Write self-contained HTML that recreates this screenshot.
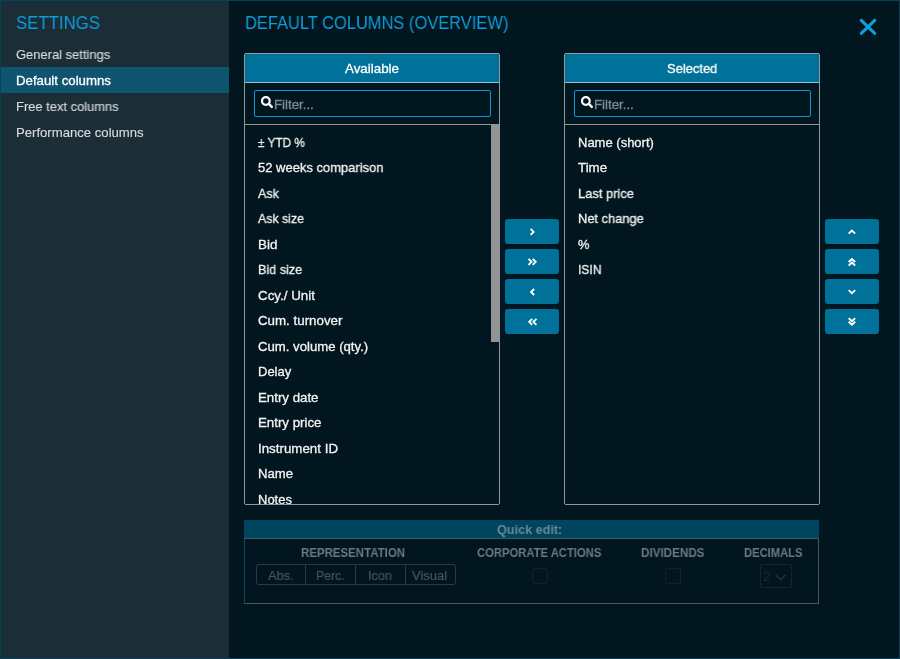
<!DOCTYPE html>
<html lang="en">
<head>
<meta charset="utf-8">
<title>Settings</title>
<style>
*{box-sizing:border-box;margin:0;padding:0}
html,body{width:900px;height:659px;overflow:hidden;background:#01161f}
body{font-family:"Liberation Sans",sans-serif;font-size:13px;color:#f2f2f2;position:relative}
.t{position:absolute;display:block;white-space:nowrap;line-height:20px;height:20px;transform-origin:0 50%;will-change:transform}
#frame{position:absolute;left:0;top:0;width:900px;height:659px;border:1px solid #0a3f58;pointer-events:none;z-index:10}
#side{position:absolute;left:0;top:0;width:229px;height:659px;background:#1b2e37}
.mi{position:absolute;left:0;width:229px;height:26px}
.mi.sel{background:#0f5570}
.panel{position:absolute;top:53px;width:256px;height:452px;border:1px solid rgba(255,255,255,.56);border-radius:2px;overflow:hidden}
.hd{position:absolute;left:0;top:0;width:254px;height:29px;background:#007199;border-bottom:1px solid rgba(255,255,255,.56)}
.sb{position:absolute;left:9px;top:36px;width:237px;height:27px;border:1px solid #0a98d4;border-radius:2px}
.dv{position:absolute;left:0;top:70px;width:254px;height:1px;background:rgba(255,255,255,.56)}
.scr{position:absolute;left:246px;top:71px;width:8px;height:217px;background:#939393}
.btn{position:absolute;width:54px;height:25px;background:#007199;border-radius:3px}
.btn svg{position:absolute;left:0;top:0}
svg{display:block;overflow:visible}
#qe{position:absolute;left:244px;top:520px;width:575px;height:84px;border:1px solid #46575f;border-top:none;border-left-color:#044a66}
#qeh{position:absolute;left:244px;top:520px;width:575px;height:19px;background:#00455f;border-bottom:1px solid #44565f}
.grp{position:absolute;left:256px;top:564px;width:200px;height:21px;border:1px solid #293b44;border-radius:3px}
.grp i{position:absolute;top:0;width:1px;height:19px;background:#293b44}
.cb{position:absolute;top:568px;width:16px;height:16px;border:1px solid #10232c;border-radius:2px}
.sel2{position:absolute;left:760px;top:564px;width:32px;height:24px;border:1px solid #13262f;border-radius:2px}
</style>
</head>
<body>
<div id="side">
<div class="mi sel" style="top:67px"></div>
</div>
<span class="t" style="left:15.80px;top:12.69px;font-size:18.5px;color:#0c9eda;transform:scaleX(0.9070);">SETTINGS</span>
<span class="t" style="left:15.70px;top:44.70px;font-size:13px;color:#d9dddf;transform:scaleX(0.9945);-webkit-text-stroke:0.12px #d9dddf;">General settings</span>
<span class="t" style="left:15.90px;top:70.70px;font-size:13px;color:#ffffff;transform:scaleX(1.0188);-webkit-text-stroke:0.3px #ffffff;">Default columns</span>
<span class="t" style="left:16.10px;top:96.70px;font-size:13px;color:#d9dddf;transform:scaleX(0.9935);-webkit-text-stroke:0.12px #d9dddf;">Free text columns</span>
<span class="t" style="left:16.10px;top:122.70px;font-size:13px;color:#d9dddf;transform:scaleX(1.0095);-webkit-text-stroke:0.12px #d9dddf;">Performance columns</span>
<span class="t" style="left:245.00px;top:12.69px;font-size:18.5px;color:#0c9eda;transform:scaleX(0.8895);">DEFAULT COLUMNS (OVERVIEW)</span>
<svg style="position:absolute;left:856px;top:15px" width="24" height="24" viewBox="856 15 24 24"><path d="M861.3 20.3 L874.7 33.4 M874.7 20.3 L861.3 33.4" stroke="#0c9fd9" stroke-width="3.1" stroke-linecap="round" fill="none"/></svg>
<div class="panel" style="left:244px"><div class="hd"></div><div class="sb"></div><div class="dv"></div><div class="scr"></div></div>
<div class="panel" style="left:564px"><div class="hd"></div><div class="sb"></div><div class="dv"></div></div>
<span class="t" style="left:344.90px;top:58.50px;font-size:13px;color:#ffffff;transform:scaleX(1.0286);-webkit-text-stroke:0.3px #ffffff;">Available</span>
<span class="t" style="left:666.60px;top:58.50px;font-size:13px;color:#ffffff;transform:scaleX(0.9936);-webkit-text-stroke:0.3px #ffffff;">Selected</span>
<svg style="position:absolute;left:260px;top:94px" width="16" height="16" viewBox="0 0 16 16"><circle cx="5.85" cy="7" r="3.85" stroke="#fff" stroke-width="2.2" fill="none"/><path d="M8.8 9.9 L11.8 12.9" stroke="#fff" stroke-width="2.4" stroke-linecap="round"/></svg>
<svg style="position:absolute;left:580px;top:94px" width="16" height="16" viewBox="0 0 16 16"><circle cx="5.85" cy="7" r="3.85" stroke="#fff" stroke-width="2.2" fill="none"/><path d="M8.8 9.9 L11.8 12.9" stroke="#fff" stroke-width="2.4" stroke-linecap="round"/></svg>
<span class="t" style="left:273.80px;top:94.50px;font-size:13px;color:#828c91;transform:scaleX(1.0205);-webkit-text-stroke:0.3px #828c91;">Filter...</span>
<span class="t" style="left:593.80px;top:94.50px;font-size:13px;color:#828c91;transform:scaleX(1.0205);-webkit-text-stroke:0.3px #828c91;">Filter...</span>
<span class="t" style="left:257.90px;top:132.50px;font-size:13px;color:#f4f4f4;transform:scaleX(0.9085);-webkit-text-stroke:0.3px #f4f4f4;">± YTD %</span>
<span class="t" style="left:257.90px;top:157.50px;font-size:13px;color:#f4f4f4;transform:scaleX(0.9980);-webkit-text-stroke:0.3px #f4f4f4;">52 weeks comparison</span>
<span class="t" style="left:257.90px;top:183.50px;font-size:13px;color:#f4f4f4;transform:scaleX(0.9609);-webkit-text-stroke:0.3px #f4f4f4;">Ask</span>
<span class="t" style="left:257.90px;top:208.50px;font-size:13px;color:#f4f4f4;transform:scaleX(0.9488);-webkit-text-stroke:0.3px #f4f4f4;">Ask size</span>
<span class="t" style="left:257.90px;top:234.50px;font-size:13px;color:#f4f4f4;transform:scaleX(1.0347);-webkit-text-stroke:0.3px #f4f4f4;">Bid</span>
<span class="t" style="left:257.90px;top:259.50px;font-size:13px;color:#f4f4f4;transform:scaleX(0.9714);-webkit-text-stroke:0.3px #f4f4f4;">Bid size</span>
<span class="t" style="left:257.90px;top:285.50px;font-size:13px;color:#f4f4f4;transform:scaleX(1.0275);-webkit-text-stroke:0.3px #f4f4f4;">Ccy./ Unit</span>
<span class="t" style="left:257.90px;top:310.50px;font-size:13px;color:#f4f4f4;transform:scaleX(1.0246);-webkit-text-stroke:0.3px #f4f4f4;">Cum. turnover</span>
<span class="t" style="left:257.90px;top:336.50px;font-size:13px;color:#f4f4f4;transform:scaleX(1.0122);-webkit-text-stroke:0.3px #f4f4f4;">Cum. volume (qty.)</span>
<span class="t" style="left:257.90px;top:361.50px;font-size:13px;color:#f4f4f4;transform:scaleX(0.9925);-webkit-text-stroke:0.3px #f4f4f4;">Delay</span>
<span class="t" style="left:257.90px;top:387.50px;font-size:13px;color:#f4f4f4;transform:scaleX(1.0211);-webkit-text-stroke:0.3px #f4f4f4;">Entry date</span>
<span class="t" style="left:257.90px;top:412.50px;font-size:13px;color:#f4f4f4;transform:scaleX(1.0221);-webkit-text-stroke:0.3px #f4f4f4;">Entry price</span>
<span class="t" style="left:257.90px;top:438.50px;font-size:13px;color:#f4f4f4;transform:scaleX(1.0256);-webkit-text-stroke:0.3px #f4f4f4;">Instrument ID</span>
<span class="t" style="left:257.90px;top:463.50px;font-size:13px;color:#f4f4f4;transform:scaleX(1.0108);-webkit-text-stroke:0.3px #f4f4f4;">Name</span>
<div style="position:absolute;left:245px;top:480px;width:254px;height:24px;overflow:hidden"><span class="t" style="left:12.90px;top:9.50px;font-size:13px;color:#f4f4f4;transform:scaleX(0.9971);-webkit-text-stroke:0.3px #f4f4f4;">Notes</span>
</div>
<span class="t" style="left:578.00px;top:132.50px;font-size:13px;color:#f4f4f4;transform:scaleX(1.0003);-webkit-text-stroke:0.3px #f4f4f4;">Name (short)</span>
<span class="t" style="left:578.00px;top:157.50px;font-size:13px;color:#f4f4f4;transform:scaleX(1.0256);-webkit-text-stroke:0.3px #f4f4f4;">Time</span>
<span class="t" style="left:578.00px;top:183.50px;font-size:13px;color:#f4f4f4;transform:scaleX(0.9898);-webkit-text-stroke:0.3px #f4f4f4;">Last price</span>
<span class="t" style="left:578.00px;top:208.50px;font-size:13px;color:#f4f4f4;transform:scaleX(0.9895);-webkit-text-stroke:0.3px #f4f4f4;">Net change</span>
<span class="t" style="left:578.00px;top:234.50px;font-size:13px;color:#f4f4f4;transform:scaleX(0.9826);-webkit-text-stroke:0.3px #f4f4f4;">%</span>
<span class="t" style="left:578.00px;top:259.50px;font-size:13px;color:#f4f4f4;transform:scaleX(0.9267);-webkit-text-stroke:0.3px #f4f4f4;">ISIN</span>
<div class="btn" style="left:505px;top:219px"><svg width="54" height="25" viewBox="0 0 54 25"><path d="M25.60 9.90 L28.60 12.90 L25.60 15.90" stroke="#fff" stroke-width="1.9" fill="none" stroke-linejoin="miter" stroke-linecap="butt"/></svg></div>
<div class="btn" style="left:505px;top:249px"><svg width="54" height="25" viewBox="0 0 54 25"><path d="M23.50 9.80 L26.50 12.80 L23.50 15.80" stroke="#fff" stroke-width="1.9" fill="none" stroke-linejoin="miter" stroke-linecap="butt"/><path d="M27.70 9.80 L30.70 12.80 L27.70 15.80" stroke="#fff" stroke-width="1.9" fill="none" stroke-linejoin="miter" stroke-linecap="butt"/></svg></div>
<div class="btn" style="left:505px;top:279px"><svg width="54" height="25" viewBox="0 0 54 25"><path d="M29.10 10.00 L26.10 13.00 L29.10 16.00" stroke="#fff" stroke-width="1.9" fill="none" stroke-linejoin="miter" stroke-linecap="butt"/></svg></div>
<div class="btn" style="left:505px;top:309px"><svg width="54" height="25" viewBox="0 0 54 25"><path d="M27.20 9.80 L24.20 12.80 L27.20 15.80" stroke="#fff" stroke-width="1.9" fill="none" stroke-linejoin="miter" stroke-linecap="butt"/><path d="M31.40 9.80 L28.40 12.80 L31.40 15.80" stroke="#fff" stroke-width="1.9" fill="none" stroke-linejoin="miter" stroke-linecap="butt"/></svg></div>
<div class="btn" style="left:825px;top:219px"><svg width="54" height="25" viewBox="0 0 54 25"><path d="M23.65 14.60 L26.90 11.60 L30.15 14.60" stroke="#fff" stroke-width="1.9" fill="none" stroke-linejoin="miter" stroke-linecap="butt"/></svg></div>
<div class="btn" style="left:825px;top:249px"><svg width="54" height="25" viewBox="0 0 54 25"><path d="M23.65 12.95 L26.90 9.95 L30.15 12.95" stroke="#fff" stroke-width="1.9" fill="none" stroke-linejoin="miter" stroke-linecap="butt"/><path d="M23.65 16.45 L26.90 13.45 L30.15 16.45" stroke="#fff" stroke-width="1.9" fill="none" stroke-linejoin="miter" stroke-linecap="butt"/></svg></div>
<div class="btn" style="left:825px;top:279px"><svg width="54" height="25" viewBox="0 0 54 25"><path d="M23.65 11.17 L26.90 14.17 L30.15 11.17" stroke="#fff" stroke-width="1.9" fill="none" stroke-linejoin="miter" stroke-linecap="butt"/></svg></div>
<div class="btn" style="left:825px;top:309px"><svg width="54" height="25" viewBox="0 0 54 25"><path d="M23.65 9.30 L26.90 12.30 L30.15 9.30" stroke="#fff" stroke-width="1.9" fill="none" stroke-linejoin="miter" stroke-linecap="butt"/><path d="M23.65 12.80 L26.90 15.80 L30.15 12.80" stroke="#fff" stroke-width="1.9" fill="none" stroke-linejoin="miter" stroke-linecap="butt"/></svg></div>
<div id="qe"></div><div id="qeh"></div>
<span class="t" style="left:497.30px;top:520.00px;font-size:13px;color:#6a8794;transform:scaleX(0.9713);font-weight:bold;">Quick edit:</span>
<span class="t" style="left:301.40px;top:542.84px;font-size:12px;color:#6b7a82;transform:scaleX(0.9552);font-weight:bold;">REPRESENTATION</span>
<span class="t" style="left:476.90px;top:542.84px;font-size:12px;color:#6b7a82;transform:scaleX(0.9365);font-weight:bold;">CORPORATE ACTIONS</span>
<span class="t" style="left:641.00px;top:542.84px;font-size:12px;color:#6b7a82;transform:scaleX(0.9713);font-weight:bold;">DIVIDENDS</span>
<span class="t" style="left:743.90px;top:542.84px;font-size:12px;color:#6b7a82;transform:scaleX(0.9325);font-weight:bold;">DECIMALS</span>
<div class="grp"><i style="left:48px"></i><i style="left:98px"></i><i style="left:148px"></i></div>
<span class="t" style="left:267.70px;top:565.50px;font-size:13px;color:#47585f;transform:scaleX(0.9769);-webkit-text-stroke:0.15px #47585f;">Abs.</span>
<span class="t" style="left:316.00px;top:565.50px;font-size:13px;color:#47585f;transform:scaleX(0.9383);-webkit-text-stroke:0.15px #47585f;">Perc.</span>
<span class="t" style="left:368.00px;top:565.50px;font-size:13px;color:#47585f;transform:scaleX(0.9787);-webkit-text-stroke:0.15px #47585f;">Icon</span>
<span class="t" style="left:412.40px;top:565.50px;font-size:13px;color:#47585f;transform:scaleX(1.0021);-webkit-text-stroke:0.15px #47585f;">Visual</span>
<div class="cb" style="left:532px"></div><div class="cb" style="left:665px"></div>
<div class="sel2"></div>
<span class="t" style="left:763.30px;top:566.84px;font-size:12px;color:#152a33;transform:scaleX(1.1170);">2</span>
<svg style="position:absolute;left:772px;top:570px" width="16" height="14" viewBox="772 570 16 14"><path d="M775.6 575 L780.6 579.6 L785.6 575" stroke="#24353d" stroke-width="1.3" fill="none"/></svg>
<div id="frame"></div>
</body>
</html>
